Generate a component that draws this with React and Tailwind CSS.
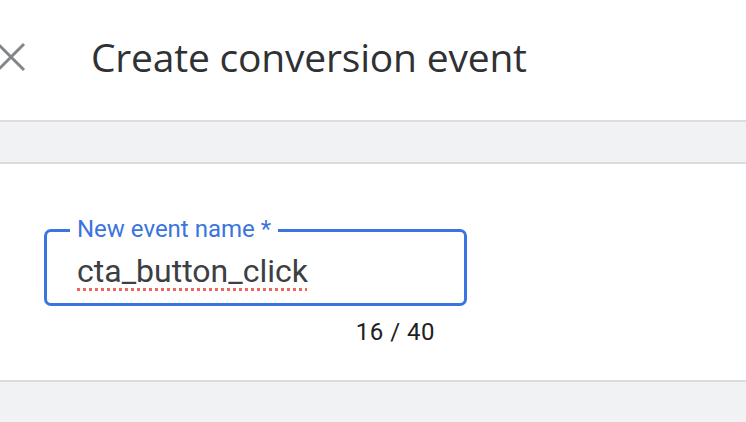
export default function App() {
  return (
    <div className="w-[746px] h-[422px] bg-white overflow-hidden flex flex-col" style={{ fontFamily: "Roboto, sans-serif" }}>
      {/* header */}
      <div className="h-[120px] shrink-0 flex items-center">
        <div className="w-[91px] shrink-0 flex items-center -mt-[6px]">
          <svg width="30" height="30" viewBox="0 0 30 30" className="-ml-[4px] text-[#80868b]">
            <path d="M2 2 L28 28 M28 2 L2 28" stroke="currentColor" strokeWidth="3" fill="none" />
          </svg>
        </div>
        <h1 className="text-[39px] text-[#303134] leading-none tracking-[-0.2px] font-['Open_Sans',sans-serif] -mt-[8px]">
          Create conversion event
        </h1>
      </div>

      <div className="h-[44px] shrink-0 bg-[#f1f2f4] border-y-2 border-[#dadce0]" />

      {/* body */}
      <div className="h-[216px] shrink-0 pl-[44px] pt-[65px]">
        <div className="relative w-[423px] h-[77px] border-[3px] border-[#3a74de] rounded-[7px] flex items-center pl-[30px]">
          <span className="absolute -top-[17px] left-[23px] px-[7px] bg-white text-[24px] leading-[28px] text-[#3a74de]">
            New event name *
          </span>
          <span className="text-[32px] text-[#3c4043] mt-[6px] underline decoration-dotted decoration-[#ee675c] decoration-[3px] underline-offset-[6px]">
            cta_button_click
          </span>
        </div>
        <div className="w-[391px] text-right mt-[12px] text-[24px] leading-[28px] text-[#202124] tracking-[0.5px]">
          16 / 40
        </div>
      </div>

      <div className="flex-1 bg-[#f1f2f4] border-t-2 border-[#dadce0]" />
    </div>
  );
}
